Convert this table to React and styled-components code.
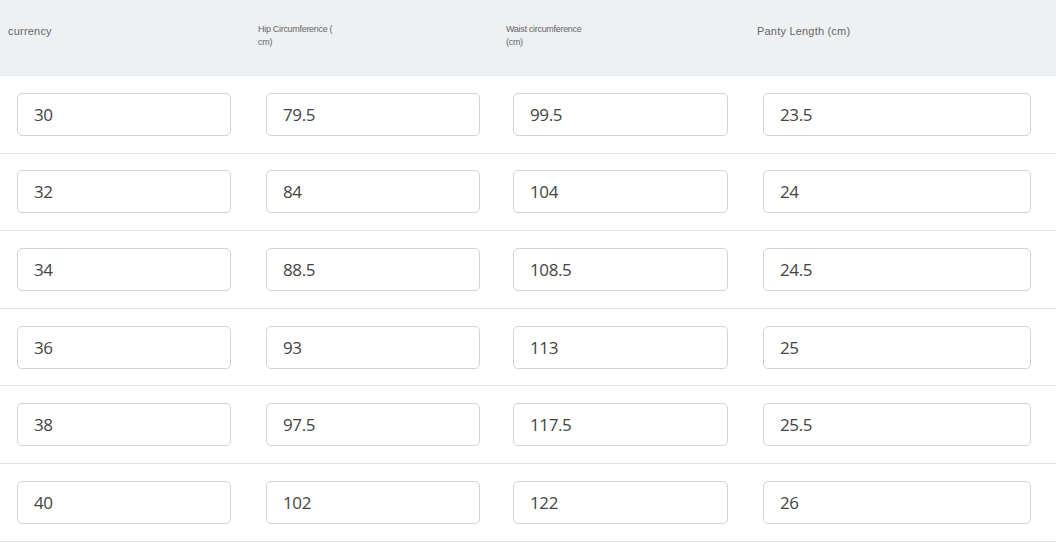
import React from "react";
import styled, { createGlobalStyle } from "styled-components";

const rows = [
  ["30", "79.5", "99.5", "23.5"],
  ["32", "84", "104", "24"],
  ["34", "88.5", "108.5", "24.5"],
  ["36", "93", "113", "25"],
  ["38", "97.5", "117.5", "25.5"],
  ["40", "102", "122", "26"],
];

const cols = [
  { width: 214, inset: 9 },
  { width: 214, inset: 8 },
  { width: 215, inset: 7 },
  { width: 268, inset: 6 },
];

const App = () => {
  return (
    <>
      <GlobalStyle />
      <Table>
        <HeaderRow>
          <HeadCell>
            <HeadText>currency</HeadText>
          </HeadCell>
          <HeadCell>
            <HeadText $small>
              Hip Circumference (<br />
              cm)
            </HeadText>
          </HeadCell>
          <HeadCell>
            <HeadText $small>
              Waist circumference
              <br />
              (cm)
            </HeadText>
          </HeadCell>
          <HeadCell>
            <HeadText>Panty Length (cm)</HeadText>
          </HeadCell>
        </HeaderRow>
        {rows.map((row, i) => (
          <Row key={i}>
            {row.map((value, j) => (
              <Cell key={j}>
                <Field
                  $width={cols[j].width}
                  $inset={cols[j].inset}
                  defaultValue={value}
                  readOnly
                />
              </Cell>
            ))}
          </Row>
        ))}
      </Table>
    </>
  );
};

export default App;

const GlobalStyle = createGlobalStyle`
  body {
    margin: 0;
    background: #ffffff;
    font-family: "Open Sans", "Liberation Sans", sans-serif;
  }
`;

const Table = styled.div`
  width: 1056px;
  display: flex;
  flex-direction: column;
`;

const HeaderRow = styled.div`
  display: grid;
  grid-template-columns: 250px 248px 251px 1fr;
  height: 75px;
  background-color: #eef1f3;
  border-bottom: 1px solid #e3e6e8;
`;

const HeadCell = styled.div`
  display: flex;
  align-items: flex-start;
  padding: 0 8px;
`;

const HeadText = styled.div`
  color: #666666;
  font-family: "Liberation Sans", Arial, sans-serif;
  font-size: ${(p) => (p.$small ? "9px" : "11px")};
  line-height: ${(p) => (p.$small ? "13px" : "14px")};
  letter-spacing: ${(p) => (p.$small ? "-0.3px" : "0.2px")};
  margin-top: ${(p) => (p.$small ? "23px" : "24px")};
`;

const Row = styled.div`
  display: grid;
  grid-template-columns: 250px 248px 251px 1fr;
  height: 76.6px;
  border-bottom: 1px solid #e4e4e4;
`;

const Cell = styled.div`
  display: flex;
  align-items: center;
  padding: 0 8px;
`;

const Field = styled.input`
  box-sizing: border-box;
  width: ${(p) => p.$width}px;
  height: 43px;
  margin-left: ${(p) => p.$inset}px;
  padding: 0 16px;
  border: 1px solid #d3d3d3;
  border-radius: 5px;
  background: #ffffff;
  color: #444444;
  font-family: "Open Sans", "Liberation Sans", sans-serif;
  font-size: 17px;
  letter-spacing: -0.4px;
  outline: none;
`;
